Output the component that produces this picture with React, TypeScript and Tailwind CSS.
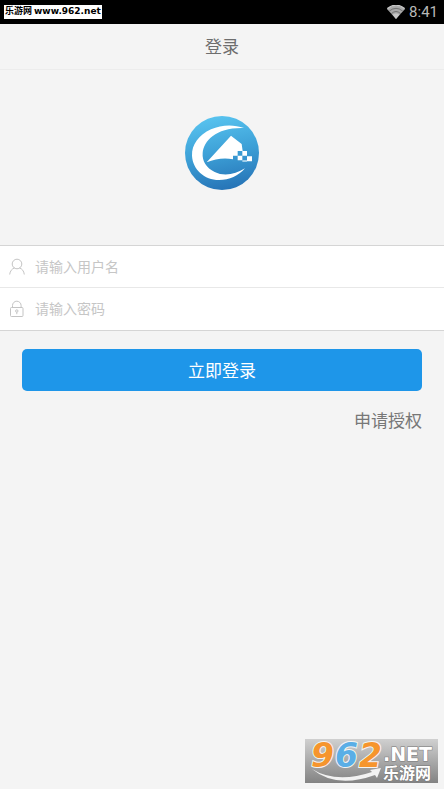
import { useState } from 'react';
import type { ReactNode } from 'react';

function WifiIcon() {
  return (
    <svg viewBox="0 0 54 42" className="h-3.5 w-[18px]" aria-hidden="true">
      <path d="M0 12Q27 -10 54 12L27 42Z" fill="#a8a8a8" />
      <path d="M1 11Q27 -10 53 11" fill="none" stroke="#c8c8c8" strokeWidth="4" />
      <path d="M7 18Q27 2 47 18M13 26Q27 13 41 26" fill="none" stroke="#555" strokeWidth="2" />
      <path d="M17 29Q27 22 37 29L27 42Z" fill="#c8c8c8" />
    </svg>
  );
}

function Logo() {
  return (
    <svg viewBox="24 24 222 222" className="size-[74px]" role="img" aria-label="logo">
      <defs>
        <linearGradient id="logoBg" x1="0.4" y1="0" x2="0.6" y2="1">
          <stop offset="0" stopColor="#58c3ef" />
          <stop offset="0.5" stopColor="#3c9fd6" />
          <stop offset="1" stopColor="#2673b6" />
        </linearGradient>
      </defs>
      <circle cx="135" cy="135" r="111" fill="url(#logoBg)" />
      <path
        d="M201 60C170 49 133 50 102 64C65 81 44 110 45 143C47 184 82 216 126 216C158 216 184 204 204 181C176 199 141 206 113 192C88 180 75 159 77 135C80 97 120 57 201 60Z"
        fill="#fff"
      />
      <path d="M162 83L194 108L197 129H182V143H168V154C140 149 115 153 89 163Z" fill="#fff" />
      <path d="M196 129h14v14h-14zM182 143h14v14h-14zM210 145h15v15h-15z" fill="#fff" />
      <path d="M196 157h14v4h-14z" fill="#d9edf8" />
    </svg>
  );
}

function UserIcon() {
  return (
    <svg viewBox="0 0 16 18" className="h-[18px] w-4" fill="none" stroke="#c4c4c4" strokeWidth="1" aria-hidden="true">
      <circle cx="8" cy="6" r="4.8" />
      <path d="M.7 16.5C1 13 3 10.8 5.5 9.9M10.5 9.9c2.500.9 4.500 3.100 4.800 6.600" />
    </svg>
  );
}

function LockIcon() {
  return (
    <svg viewBox="0 0 16 18" className="h-[18px] w-4" fill="none" stroke="#c4c4c4" strokeWidth="1" aria-hidden="true">
      <rect x="1.500" y="7.500" width="12.500" height="9" rx="1" />
      <path d="M3.500 7.500V5.500a4.300 4.300 0 0 1 8.600 0v2" />
      <circle cx="7.800" cy="11" r="1.200" />
      <path d="M7.800 12.200v2" />
    </svg>
  );
}

type FieldProps = {
  id: string;
  label: string;
  type: string;
  icon: ReactNode;
  value: string;
  onChange: (v: string) => void;
};

function Field({ id, label, type, icon, value, onChange }: FieldProps) {
  return (
    <div className="flex h-[42px] items-center gap-2 px-[9px]">
      <label htmlFor={id} aria-label={label}>{icon}</label>
      <input
        id={id}
        type={type}
        value={value}
        placeholder={label}
        onChange={(e) => onChange(e.target.value)}
        className="min-w-0 flex-1 bg-transparent pl-0.5 text-sm text-[#555] outline-none placeholder:text-[#c6c6c6]"
      />
    </div>
  );
}

function SiteMark() {
  return (
    <svg viewBox="0 -6 133 50" className="h-[50px] w-[133px]" role="img" aria-label="962.NET 乐游网">
      <defs>
        <linearGradient id="markBg" x1="0" y1="0" x2="0" y2="1">
          <stop offset="0" stopColor="#d0d0d0" />
          <stop offset="1" stopColor="#838383" />
        </linearGradient>
      </defs>
      <rect width="133" height="44" fill="url(#markBg)" />
      <g
        fontFamily='"DejaVu Sans", sans-serif'
        fontWeight="700"
        fontStyle="italic"
        fontSize="33"
        stroke="#f4f4f4"
        strokeWidth="2"
        paintOrder="stroke"
      >
        <text x="6" y="28" fill="#f6952d">9</text>
        <text x="30" y="28" fill="#5aaee6">6</text>
        <text x="54" y="28" fill="#f6952d">2</text>
      </g>
      <path d="M7 30Q31 45 67 33L65 31L76 29L72 39L70 36Q31 50 7 30Z" fill="#f2f2f2" />
      <g fill="#fff" stroke="#777" strokeWidth="1" paintOrder="stroke">
        <text x="78" y="22" fontFamily='"DejaVu Sans", sans-serif' fontWeight="700" fontSize="19">.NET</text>
        <text x="78" y="40" fontFamily='"Liberation Sans", "Noto Sans CJK SC", sans-serif' fontWeight="700" fontSize="16">
          乐游网
        </text>
      </g>
    </svg>
  );
}

export default function App() {
  const [username, setUsername] = useState('');
  const [password, setPassword] = useState('');

  return (
    <div className="flex min-h-screen flex-col bg-[#f4f4f4] font-['Roboto','Noto_Sans_CJK_SC',sans-serif]">
      <div className="flex h-6 items-center justify-between bg-black pr-1.5 pl-1">
        <span className="flex h-3.5 items-center gap-0.5 bg-white px-px font-['DejaVu_Sans','Noto_Sans_CJK_SC',sans-serif] text-[9px] font-bold whitespace-nowrap text-black">
          <span>乐游网</span>
          <span>www.962.net</span>
        </span>
        <span className="flex items-center gap-1 text-[15px] text-[#b8b8b8]">
          <WifiIcon />
          8:41
        </span>
      </div>

      <header className="flex h-[46px] items-center justify-center border-b border-[#ececec] pt-0.5">
        <h1 className="text-[17px] text-[#6e6e6e]">登录</h1>
      </header>

      <main>
        <div className="flex justify-center pt-[46px] pb-[55px]">
          <Logo />
        </div>

        <form onSubmit={(e) => e.preventDefault()}>
          <div className="divide-y divide-[#e8e8e8] border-y border-[#d5d5d5] bg-white">
            <Field
              id="username"
              label="请输入用户名"
              type="text"
              icon={<UserIcon />}
              value={username}
              onChange={setUsername}
            />
            <Field
              id="password"
              label="请输入密码"
              type="password"
              icon={<LockIcon />}
              value={password}
              onChange={setPassword}
            />
          </div>

          <div className="flex flex-col gap-[18px] px-[22px] pt-[18px]">
            <button type="submit" className="h-[42px] rounded-[5px] bg-[#1e96e9] pt-1 text-[17px] text-white">
              立即登录
            </button>
            <a href="#apply" className="self-end text-[17px] text-[#777]">申请授权</a>
          </div>
        </form>
      </main>

      <footer className="mt-auto flex justify-end pr-1.5 pb-1.5">
        <SiteMark />
      </footer>
    </div>
  );
}
